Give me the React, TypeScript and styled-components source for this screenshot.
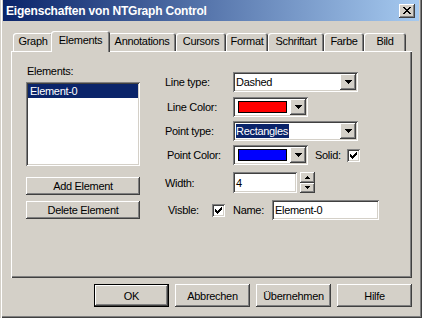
import React from 'react'
import styled, { createGlobalStyle, css } from 'styled-components'

const face = '#d4d0c8'
const shadow = '#808080'
const darkShadow = '#404040'
const highlight = '#ffffff'
const navy = '#0a246a'

const GlobalStyle = createGlobalStyle`
  html, body {
    margin: 0;
    padding: 0;
    background: ${face};
  }
  body {
    font-family: 'Liberation Sans', Arial, sans-serif;
    font-size: 11px;
    letter-spacing: -0.3px;
    color: #000;
  }
  * {
    box-sizing: border-box;
  }
`

const raised = css`
  background: ${face};
  box-shadow: inset -1px -1px ${darkShadow}, inset 1px 1px ${highlight},
    inset -2px -2px ${shadow}, inset 2px 2px ${face};
`

const sunken = css`
  box-shadow: inset 1px 1px ${shadow}, inset -1px -1px ${highlight},
    inset 2px 2px ${darkShadow}, inset -2px -2px ${face};
`

const Window = styled.div`
  width: 422px;
  height: 318px;
  background: ${face};
  padding: 0 3px 3px 3px;
  box-shadow: inset 1px 0 ${face}, inset 2px 0 ${highlight},
    inset -1px -1px ${darkShadow}, inset -2px -2px ${shadow};
  display: flex;
  flex-direction: column;
`

const TitleBar = styled.div`
  height: 21px;
  display: flex;
  align-items: center;
  justify-content: space-between;
  padding: 0 4px 0 3px;
  background: linear-gradient(90deg, ${navy}, #a6caf0);
  color: #fff;
  font-weight: bold;
  font-size: 12px;
  letter-spacing: -0.2px;
`

const CloseButton = styled.div`
  width: 16px;
  height: 14px;
  ${raised};
  display: flex;
  align-items: center;
  justify-content: center;
  padding-right: 1px;
`

const Body = styled.div`
  padding: 10px 7px 0 8px;
  display: flex;
  flex-direction: column;
`

const TabStrip = styled.div`
  height: 20px;
  display: flex;
  align-items: flex-end;
  padding-left: 2px;
`

const Tab = styled.div<{ $w: number; $active?: boolean }>`
  flex-shrink: 0;
  width: ${(p) => p.$w}px;
  height: 18px;
  padding-top: 2px;
  text-align: center;
  line-height: 13px;
  background: ${face};
  border-radius: 3px 3px 0 0;
  box-shadow: inset 1px 1px ${highlight}, inset -1px 0 ${darkShadow},
    inset -2px 0 ${shadow};
  ${(p) =>
    p.$active &&
    css`
      width: ${p.$w + 4}px;
      height: 21px;
      padding-top: 3px;
      margin: 0 -2px -1px;
      position: relative;
      z-index: 1;
    `}
`

const Panel = styled.div`
  height: 227px;
  background: ${face};
  box-shadow: inset 1px 1px ${highlight}, inset -1px -1px ${darkShadow},
    inset -2px -2px ${shadow};
  display: flex;
  gap: 25px;
  padding: 14px 0 0 15px;
`

const LeftColumn = styled.div`
  width: 114px;
  display: flex;
  flex-direction: column;
`

const Caption = styled.div`
  line-height: 13px;
  padding-left: 1px;
`

const ListBox = styled.div`
  margin-top: 4px;
  height: 84px;
  background: #fff;
  ${sunken};
  padding: 2px;
`

const ListItem = styled.div<{ $selected?: boolean }>`
  height: 14px;
  line-height: 14px;
  padding-left: 2px;
  ${(p) =>
    p.$selected &&
    css`
      background: ${navy};
      color: #fff;
    `}
`

const PushButton = styled.div<{ $w?: number; $h?: number; $mt?: number; $default?: boolean }>`
  width: ${(p) => (p.$w ? `${p.$w}px` : '100%')};
  height: ${(p) => p.$h ?? 18}px;
  margin-top: ${(p) => p.$mt ?? 0}px;
  display: flex;
  align-items: center;
  justify-content: center;
  ${raised};
  ${(p) =>
    p.$default &&
    css`
      box-shadow: inset 0 0 0 1px #000, inset -2px -2px ${darkShadow},
        inset 2px 2px ${highlight}, inset -3px -3px ${shadow};
    `}
`

const RightColumn = styled.div`
  padding-top: 7px;
  display: flex;
  flex-direction: column;
`

const Row = styled.div<{ $mt?: number; $h?: number }>`
  display: flex;
  align-items: center;
  height: ${(p) => p.$h ?? 20}px;
  margin-top: ${(p) => p.$mt ?? 0}px;
`

const Label = styled.div<{ $w: number; $indent?: number; $ml?: number }>`
  width: ${(p) => p.$w}px;
  flex-shrink: 0;
  padding-left: ${(p) => p.$indent ?? 0}px;
  margin-left: ${(p) => p.$ml ?? 0}px;
`

const Field = styled.div<{ $w: number; $h?: number }>`
  width: ${(p) => p.$w}px;
  height: ${(p) => p.$h ?? 20}px;
  background: #fff;
  ${sunken};
  padding: 2px;
  display: flex;
  align-items: stretch;
`

const FieldText = styled.div`
  flex: 1;
  padding-left: 1px;
  display: flex;
  align-items: center;
`

const Highlighted = styled.span`
  background: ${navy};
  color: #fff;
  line-height: 14px;
  padding: 0 1px 0 0;
`

const DropButton = styled.div`
  width: 16px;
  ${raised};
  display: flex;
  align-items: center;
  justify-content: center;
`

const Swatch = styled.div<{ $color: string }>`
  flex: 1;
  margin: 2px 3px;
  border: 1px solid #000;
  background: ${(p) => p.$color};
`

const CheckBox = styled.div<{ $ml?: number }>`
  width: 13px;
  height: 13px;
  flex-shrink: 0;
  margin-left: ${(p) => p.$ml ?? 0}px;
  background: #fff;
  ${sunken};
  display: flex;
  align-items: center;
  justify-content: center;
`

const Spinner = styled.div`
  width: 15px;
  height: 21px;
  margin-left: 3px;
  display: flex;
  flex-direction: column;
`

const SpinPart = styled.div`
  flex: 1;
  ${raised};
  display: flex;
  align-items: center;
  justify-content: center;
`

const ButtonBar = styled.div`
  margin-top: 6px;
  display: flex;
  justify-content: flex-end;
  gap: 6px;
`

const DownArrow = () => (
  <svg width="7" height="4" viewBox="0 0 7 4" shapeRendering="crispEdges">
    <path d="M0 0h7v1H0z M1 1h5v1H1z M2 2h3v1H2z M3 3h1v1H3z" fill="#000" />
  </svg>
)

const SmallArrow = ({ up }: { up?: boolean }) => (
  <svg width="5" height="3" viewBox="0 0 5 3" shapeRendering="crispEdges">
    <path
      d={up ? 'M2 0h1v1H2z M1 1h3v1H1z M0 2h5v1H0z' : 'M0 0h5v1H0z M1 1h3v1H1z M2 2h1v1H2z'}
      fill="#000"
    />
  </svg>
)

const CheckMark = () => (
  <svg width="7" height="7" viewBox="0 0 7 7" shapeRendering="crispEdges">
    <path
      d="M6 0h1v1H6z M5 1h2v1H5z M0 2h1v1H0z M4 2h3v1H4z M0 3h2v1H0z M3 3h3v1H3z M0 4h5v1H0z M1 5h3v1H1z M2 6h1v1H2z"
      fill="#000"
    />
  </svg>
)

const CloseGlyph = () => (
  <svg width="8" height="7" viewBox="0 0 8 7" shapeRendering="crispEdges">
    <path
      d="M0 0h2v1H0z M6 0h2v1H6z M1 1h2v1H1z M5 1h2v1H5z M2 2h4v1H2z M3 3h2v1H3z M2 4h4v1H2z M1 5h2v1H1z M5 5h2v1H5z M0 6h2v1H0z M6 6h2v1H6z"
      fill="#000"
    />
  </svg>
)

const ColorCombo = ({ color }: { color: string }) => (
  <Field $w={75}>
    <Swatch $color={color} />
    <DropButton>
      <DownArrow />
    </DropButton>
  </Field>
)

const tabs = [
  { title: 'Graph', w: 40 },
  { title: 'Elements', w: 55, active: true },
  { title: 'Annotations', w: 68 },
  { title: 'Cursors', w: 50 },
  { title: 'Format', w: 42 },
  { title: 'Schriftart', w: 56 },
  { title: 'Farbe', w: 40 },
  { title: 'Bild', w: 42 },
]

const App = () => {
  return (
    <>
      <GlobalStyle />
      <Window>
        <TitleBar>
          <span>Eigenschaften von NTGraph Control</span>
          <CloseButton>
            <CloseGlyph />
          </CloseButton>
        </TitleBar>
        <Body>
          <TabStrip>
            {tabs.map((t) => (
              <Tab key={t.title} $w={t.w} $active={t.active}>
                {t.title}
              </Tab>
            ))}
          </TabStrip>
          <Panel>
            <LeftColumn>
              <Caption>Elements:</Caption>
              <ListBox>
                <ListItem $selected>Element-0</ListItem>
              </ListBox>
              <PushButton $mt={11}>Add Element</PushButton>
              <PushButton $mt={6}>Delete Element</PushButton>
            </LeftColumn>
            <RightColumn>
              <Row>
                <Label $w={68}>Line type:</Label>
                <Field $w={125}>
                  <FieldText>Dashed</FieldText>
                  <DropButton>
                    <DownArrow />
                  </DropButton>
                </Field>
              </Row>
              <Row $mt={5}>
                <Label $w={68} $indent={2}>
                  Line Color:
                </Label>
                <ColorCombo color="#ff0000" />
              </Row>
              <Row $mt={4}>
                <Label $w={68}>Point type:</Label>
                <Field $w={125}>
                  <FieldText>
                    <Highlighted>Rectangles</Highlighted>
                  </FieldText>
                  <DropButton>
                    <DownArrow />
                  </DropButton>
                </Field>
              </Row>
              <Row $mt={4}>
                <Label $w={68} $indent={2}>
                  Point Color:
                </Label>
                <ColorCombo color="#0000ff" />
                <Label $w={32} $ml={7}>
                  Solid:
                </Label>
                <CheckBox>
                  <CheckMark />
                </CheckBox>
              </Row>
              <Row $mt={7} $h={21}>
                <Label $w={68}>Width:</Label>
                <Field $w={64} $h={21}>
                  <FieldText>4</FieldText>
                </Field>
                <Spinner>
                  <SpinPart>
                    <SmallArrow up />
                  </SpinPart>
                  <SpinPart>
                    <SmallArrow />
                  </SpinPart>
                </Spinner>
              </Row>
              <Row $mt={7}>
                <Label $w={47} $indent={3}>
                  Visble:
                </Label>
                <CheckBox>
                  <CheckMark />
                </CheckBox>
                <Label $w={39} $ml={8}>
                  Name:
                </Label>
                <Field $w={107}>
                  <FieldText>Element-0</FieldText>
                </Field>
              </Row>
            </RightColumn>
          </Panel>
          <ButtonBar>
            <PushButton $w={75} $h={23} $default>
              OK
            </PushButton>
            <PushButton $w={75} $h={23}>
              Abbrechen
            </PushButton>
            <PushButton $w={75} $h={23}>
              Übernehmen
            </PushButton>
            <PushButton $w={75} $h={23}>
              Hilfe
            </PushButton>
          </ButtonBar>
        </Body>
      </Window>
    </>
  )
}

export default App
